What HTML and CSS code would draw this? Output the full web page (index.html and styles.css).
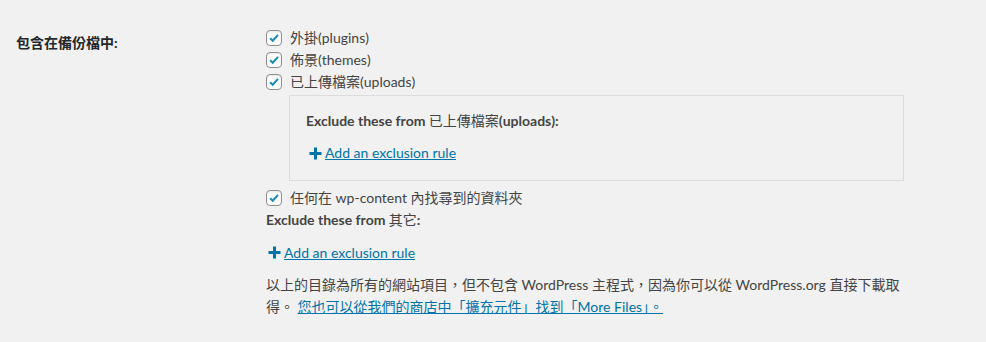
FILE: index.html
```html
<!DOCTYPE html>
<html lang="zh-Hant">

<head>
    <meta charset="UTF-8">
    <meta name="viewport" content="width=device-width, initial-scale=1.0">
    <title>備份設定</title>
    <link rel="stylesheet" href="styles.css">
</head>

<body>
    <div class="setting-row">
        <div class="setting-label">包含在備份檔中:</div>

        <div class="setting-field">
            <label class="check-row">
                <span class="checkbox"><svg viewBox="0 0 16 16"><path d="M3.6 8.2 L6.6 11.2 L12.6 4.4"/></svg></span>
                外掛(plugins)
            </label>
            <label class="check-row">
                <span class="checkbox"><svg viewBox="0 0 16 16"><path d="M3.6 8.2 L6.6 11.2 L12.6 4.4"/></svg></span>
                佈景(themes)
            </label>
            <label class="check-row">
                <span class="checkbox"><svg viewBox="0 0 16 16"><path d="M3.6 8.2 L6.6 11.2 L12.6 4.4"/></svg></span>
                已上傳檔案(uploads)
            </label>

            <div class="exclude-box">
                <div class="exclude-title">Exclude these from <span class="cjk">已上傳檔案</span>(uploads):</div>
                <a href="#" class="add-rule">
                    <svg class="plus" viewBox="0 0 13 13"><path d="M6.5 0.5 V12.5 M0.5 6.5 H12.5"/></svg><span>Add an exclusion rule</span>
                </a>
            </div>

            <label class="check-row after-box">
                <span class="checkbox"><svg viewBox="0 0 16 16"><path d="M3.6 8.2 L6.6 11.2 L12.6 4.4"/></svg></span>
                任何在 wp-content 內找尋到的資料夾
            </label>
            <div class="exclude-title">Exclude these from <span class="cjk">其它</span>:</div>
            <a href="#" class="add-rule other">
                <svg class="plus" viewBox="0 0 13 13"><path d="M6.5 0.5 V12.5 M0.5 6.5 H12.5"/></svg><span>Add an exclusion rule</span>
            </a>

            <p class="note">以上的目錄為所有的網站項目，但不包含 WordPress 主程式，因為你可以從 WordPress.org 直接下載取得。 <a href="#">您也可以從我們的商店中「擴充元件」找到「More Files」。</a></p>
        </div>
    </div>
</body>

</html>
```

FILE: styles.css
```css
/* General Styles */
body {
    margin: 0;
    padding: 0;
    background-color: #f1f1f1;
    color: #444;
    font-family: "Lato", "Noto Sans CJK TC", sans-serif;
    font-size: 14px;
    line-height: 22px;
}

a {
    color: #0073aa;
}

/* Setting Row */
.setting-row {
    display: flex;
    padding: 27px 0 0 16px;
}

.setting-label {
    width: 250px;
    padding-top: 5px;
    font-weight: bold;
    color: #23282d;
}

.setting-field {
    width: 638px;
}

/* Checkboxes */
.check-row {
    display: flex;
    align-items: center;
    height: 22px;
}

.checkbox {
    width: 14px;
    height: 14px;
    margin-right: 8px;
    border: 1px solid #8c8f94;
    border-radius: 4px;
    background: #fff;
    box-shadow: inset 0 1px 2px rgba(0, 0, 0, 0.1);
}

.checkbox svg {
    display: block;
    width: 14px;
    height: 14px;
    fill: none;
    stroke: #1e8cbe;
    stroke-width: 2.4;
}

.check-row.after-box {
    margin-top: 6px;
}

/* Exclusion Box */
.exclude-box {
    margin: 2px 0 0 23px;
    padding: 14px 16px 14px;
    border: 1px solid #dcdcdc;
}

.exclude-title {
    font-weight: bold;
}

.exclude-title .cjk {
    font-weight: normal;
}

.add-rule {
    display: inline-flex;
    align-items: center;
    gap: 3px;
    margin-top: 10px;
    padding-left: 3px;
}

.add-rule.other {
    margin-top: 11px;
    padding-left: 2px;
}

.add-rule .plus {
    width: 13px;
    height: 13px;
    fill: none;
    stroke: #0073aa;
    stroke-width: 3;
}

.note {
    margin: 9px 0 0;
}
```
